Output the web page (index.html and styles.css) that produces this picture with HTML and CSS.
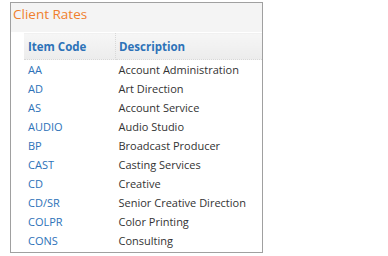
FILE: index.html
```html
<!DOCTYPE html>
<html lang="en">
<head>
    <title>Client Rates</title>
    <link rel="stylesheet" href="styles.css">
</head>
<body>
    <div class="panel">
        <div class="panel-title">Client Rates</div>
        <table class="rates">
            <thead>
                <tr>
                    <th class="code-col">Item Code</th>
                    <th>Description</th>
                </tr>
            </thead>
            <tbody>
                <tr><td><a href="#">AA</a></td><td>Account Administration</td></tr>
                <tr><td><a href="#">AD</a></td><td>Art Direction</td></tr>
                <tr><td><a href="#">AS</a></td><td>Account Service</td></tr>
                <tr><td><a href="#">AUDIO</a></td><td>Audio Studio</td></tr>
                <tr><td><a href="#">BP</a></td><td>Broadcast Producer</td></tr>
                <tr><td><a href="#">CAST</a></td><td>Casting Services</td></tr>
                <tr><td><a href="#">CD</a></td><td>Creative</td></tr>
                <tr><td><a href="#">CD/SR</a></td><td>Senior Creative Direction</td></tr>
                <tr><td><a href="#">COLPR</a></td><td>Color Printing</td></tr>
                <tr><td><a href="#">CONS</a></td><td>Consulting</td></tr>
            </tbody>
        </table>
    </div>
</body>
</html>
```

FILE: styles.css
```css
body {
    font-family: "Open Sans", Arial, sans-serif;
    margin: 0;
    padding: 0;
    background: #fff;
}
.panel {
    margin: 2px 0 0 10px;
    width: 251px;
    height: 249px;
    border: 1px solid #a0a0a0;
}
.panel-title {
    height: 29px;
    line-height: 23px;
    padding-left: 2px;
    background: #f4f4f4;
    color: #f07f2d;
    font-size: 13.5px;
}
.rates {
    margin-left: 13px;
    width: 238px;
    border-collapse: collapse;
    font-size: 11px;
}
.rates th {
    height: 26px;
    padding: 0 3px;
    text-align: left;
    color: #2d72b8;
    font-weight: bold;
    font-size: 11.5px;
    background: linear-gradient(#f6f6f6, #ececec);
    border-top: 1px solid #fff;
    border-bottom: 1px dotted #d8d8d8;
}
.rates th.code-col {
    width: 84px;
    padding-left: 4px;
    border-right: 1px dotted #d8d8d8;
}
.rates td {
    height: 18px;
    padding: 0 3px 1px;
    color: #333;
}
.rates td:first-child {
    padding-left: 4px;
}
.rates a {
    color: #2d72b8;
    text-decoration: none;
}
```
